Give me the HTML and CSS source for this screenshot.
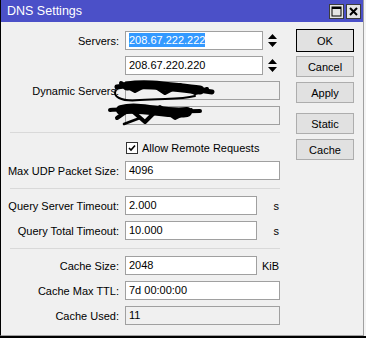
FILE: index.html
```html
<!DOCTYPE html>
<html>
<head>
	<meta charset="utf-8">
	<title>DNS Settings</title>
	<link rel="stylesheet" href="styles.css">
</head>
<body>
	<div class="window">
		<div class="titlebar">
			<span class="title">DNS Settings</span>
			<div class="tb-buttons">
				<span class="tb-btn">
					<svg width="11" height="11" viewBox="0 0 11 11"><rect x="1" y="1" width="9" height="9" fill="none" stroke="#000" stroke-width="1"/><rect x="1" y="1" width="9" height="2" fill="#000"/></svg>
				</span>
				<span class="tb-btn">
					<svg width="11" height="11" viewBox="0 0 11 11"><path d="M2 2 L9 9 M9 2 L2 9" stroke="#000" stroke-width="2"/></svg>
				</span>
			</div>
		</div>

		<div class="content">
			<div class="form">
				<div class="group">
					<div class="row">
						<label>Servers:</label>
						<div class="field w-srv"><span class="sel">208.67.222.222</span></div>
						<svg class="spin" width="9" height="13" viewBox="0 0 9 13"><path d="M0 5 L4.5 0 L9 5 Z M0 8 L4.5 13 L9 8 Z" fill="#000"/></svg>
					</div>
					<div class="row">
						<label></label>
						<div class="field w-srv">208.67.220.220</div>
						<svg class="spin" width="9" height="13" viewBox="0 0 9 13"><path d="M0 5 L4.5 0 L9 5 Z M0 8 L4.5 13 L9 8 Z" fill="#000"/></svg>
					</div>
					<div class="row">
						<label>Dynamic Servers:</label>
						<div class="field w-full off"></div>
					</div>
					<div class="row">
						<label></label>
						<div class="field w-full off"></div>
					</div>
				</div>

				<div class="sep"></div>

				<div class="group g-tight">
					<div class="check-row">
						<span class="checkbox">
							<svg width="10" height="10" viewBox="0 0 10 10"><path d="M2 5 L4 7 L8 2.5" fill="none" stroke="#000" stroke-width="1.6"/></svg>
						</span>
						<span>Allow Remote Requests</span>
					</div>
					<div class="row">
						<label>Max UDP Packet Size:</label>
						<div class="field w-full">4096</div>
					</div>
				</div>

				<div class="sep"></div>

				<div class="group">
					<div class="row">
						<label>Query Server Timeout:</label>
						<div class="field w-short">2.000</div>
						<span class="unit">s</span>
					</div>
					<div class="row">
						<label>Query Total Timeout:</label>
						<div class="field w-short">10.000</div>
						<span class="unit">s</span>
					</div>
				</div>

				<div class="sep"></div>

				<div class="group">
					<div class="row">
						<label>Cache Size:</label>
						<div class="field w-short">2048</div>
						<span class="unit">KiB</span>
					</div>
					<div class="row">
						<label>Cache Max TTL:</label>
						<div class="field w-full">7d 00:00:00</div>
					</div>
					<div class="row">
						<label>Cache Used:</label>
						<div class="field w-full off">11</div>
					</div>
				</div>
			</div>

			<div class="buttons">
				<div class="btn default">OK</div>
				<div class="btn">Cancel</div>
				<div class="btn">Apply</div>
				<div class="btn gap-big">Static</div>
				<div class="btn">Cache</div>
			</div>
		</div>

		<!-- redaction marks over the dynamic servers -->
		<svg class="scribble" width="115" height="55" viewBox="0 0 115 55">
			<g fill="none" stroke="#000" stroke-linecap="round" stroke-linejoin="round">
				<path d="M12 12 C35 8, 65 11, 107 17" stroke-width="5"/>
				<path d="M22 11 C45 7, 70 13, 95 15" stroke-width="9"/>
				<path d="M16 8 L30 16 L45 8 L60 18 L75 10 L90 18 L102 14" stroke-width="4"/>
				<path d="M11 15 C7 21, 15 27, 35 25 C60 23, 75 25, 90 21" stroke-width="2"/>
				<path d="M5 35 C25 33, 55 37, 95 36" stroke-width="4"/>
				<path d="M16 35 C35 30, 60 40, 82 37" stroke-width="10"/>
				<path d="M12 43 L25 34 L40 47 L55 32 L70 43 L86 35" stroke-width="4"/>
				<path d="M19 49 L35 43" stroke-width="2.5"/>
			</g>
		</svg>
	</div>
	<div class="shadow"></div>
</body>
</html>
```

FILE: styles.css
```css
*{margin: 0;padding: 0;box-sizing: border-box;}
body{
	width: 366px;
	height: 338px;
	overflow: hidden;
	background: #f4f4f4;
	font: 11px "Liberation Sans", Arial, sans-serif;
	color: #000;
}
.window{
	position: relative;
	width: 364px;
	height: 336px;
	background: #f0f0f0;
	border-left: 1px solid #000;
	border-right: 1px solid #a0a0a0;
	border-bottom: 1px solid #a0a0a0;
}
.shadow{
	height: 2px;
	background: #000;
}
.titlebar{
	height: 22px;
	background: #4b50c8;
	color: #fff;
	display: flex;
	align-items: center;
	justify-content: space-between;
	padding: 0 2px 0 6px;
}
.title{
	font-size: 12.5px;
}
.tb-buttons{
	display: flex;
	gap: 2px;
}
.tb-btn{
	width: 15px;
	height: 15px;
	background: #e4e4e4;
	border: 1px solid #3c3c3c;
	display: flex;
	align-items: center;
	justify-content: center;
}
.content{
	display: flex;
}
.form{
	width: 289px;
	padding-top: 9px;
}
.group{
	display: flex;
	flex-direction: column;
	gap: 6px;
}
.g-tight{
	gap: 5px;
}
.row{
	display: flex;
	align-items: center;
	height: 19px;
}
.row label{
	width: 118px;
	text-align: right;
	margin-right: 6px;
}
.field{
	height: 19px;
	border: 1px solid #a0a0a0;
	background: #fff;
	padding-left: 3px;
	line-height: 17px;
	white-space: nowrap;
	overflow: hidden;
}
.field.off{
	background: #f0f0f0;
}
.w-srv{width: 138px;}
.w-full{width: 155px;}
.w-short{width: 132px;}
.sel{
	background: #3399ff;
	color: #fff;
	padding: 1px 0;
}
.spin{
	margin-left: 5px;
}
.unit{
	width: 22px;
	text-align: right;
}
.sep{
	width: 270px;
	height: 1px;
	margin: 7px 0 6px 9px;
	background: #d9d9d9;
}
.sep + .group + .sep{
	margin: 8px 0 7px 9px;
}
.sep + .group + .sep + .group + .sep{
	margin: 8px 0 7px 9px;
}
.check-row{
	display: flex;
	align-items: center;
	height: 17px;
	padding-left: 125px;
}
.checkbox{
	width: 12px;
	height: 12px;
	border: 1px solid #333;
	background: #fff;
	display: flex;
	align-items: center;
	justify-content: center;
	margin-right: 4px;
}
.buttons{
	width: 58px;
	margin-left: 6px;
	padding-top: 7px;
	display: flex;
	flex-direction: column;
}
.btn{
	height: 21px;
	margin-top: 5px;
	border: 1px solid #adadad;
	background: #e1e1e1;
	display: flex;
	align-items: center;
	justify-content: center;
}
.btn.default{
	height: 23px;
	margin-top: 0;
	margin-bottom: -1px;
	border-color: #000;
}
.btn.gap-big{
	margin-top: 10px;
}
.scribble{
	position: absolute;
	left: 104px;
	top: 75px;
}
```
